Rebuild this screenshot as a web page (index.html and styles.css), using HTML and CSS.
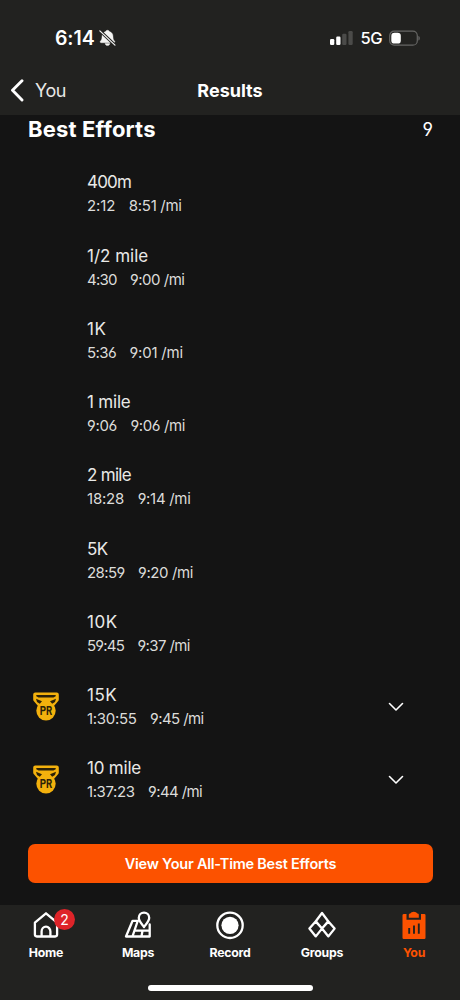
FILE: index.html
```html
<!DOCTYPE html>
<html lang="en">
<head>
<meta charset="utf-8">
<title>Results</title>
<link rel="stylesheet" href="styles.css">
</head>
<body>
<div class="screen">
  <header class="top">
    <div class="status">
      <div class="clock"><span class="time">6:14</span>
        <svg class="bell" width="17" height="18" viewBox="0 0 18 18"><path d="M9 .8c-1 0-1.700.6-2 1.400C4.300 3 3.200 5 3.200 7.300c0 3-.7 3.900-1.700 5-.6.8-.3 1.700.7 1.700h13.600c1 0 1.300-.9.7-1.700-1-1.100-1.700-2-1.700-5 0-2.300-1.100-4.300-3.800-5.100C10.700 1.400 10 .8 9 .8zM6.500 14.800h5c-.2 1.400-1.200 2.200-2.500 2.200s-2.300-.8-2.500-2.200z" fill="#f4f4f2" stroke="#f4f4f2" stroke-width=".4"/><path d="M1 1.500l16 15.200" stroke="#222220" stroke-width="3.200"/><path d="M.9 1.500l16 15" stroke="#f4f4f2" stroke-width="1.300" stroke-linecap="round"/></svg>
      </div>
      <div class="signals">
        <svg width="24" height="16" viewBox="0 0 24 16"><rect x="0" y="9" width="4.300" height="6" rx="1.200" fill="#fff"/><rect x="6.200" y="6.500" width="4.300" height="8.500" rx="1.200" fill="#fff"/><rect x="12.200" y="3.800" width="4.300" height="11.200" rx="1.200" fill="#4b4b49"/><rect x="18.400" y="1" width="4.300" height="14" rx="1.200" fill="#4b4b49"/></svg>
        <span class="net">5G</span>
        <svg width="32" height="17" viewBox="0 0 32 17"><rect x=".7" y="1.200" width="27.600" height="14" rx="4.500" fill="none" stroke="#666664" stroke-width="1.200"/><rect x="2.300" y="2.800" width="9.500" height="10.800" rx="3.200" fill="#fff"/><path d="M29.500 6c1.500.5 1.500 4 0 4.500z" fill="#777"/></svg>
      </div>
    </div>
    <nav class="navbar">
      <a class="back"><svg width="14" height="23" viewBox="0 0 14 23"><path d="M12 1.700L2.500 11.300l9.500 9.600" fill="none" stroke="#fff" stroke-width="2.900" stroke-linecap="round" stroke-linejoin="round"/></svg><span>You</span></a>
      <h1>Results</h1>
    </nav>
  </header>

  <main class="content">
    <div class="heading"><h2>Best Efforts</h2><span class="count">9</span></div>
    <ul class="efforts">
      <li class="effort"><div class="medal"></div><div class="info"><div class="name k8">400m</div><div class="stats"><span class="k1">2:12</span><span class="k3">8:51 /mi</span></div></div></li>
      <li class="effort"><div class="medal"></div><div class="info"><div class="name">1/2 mile</div><div class="stats"><span class="k8">4:30</span><span class="k5">9:00 /mi</span></div></div></li>
      <li class="effort"><div class="medal"></div><div class="info"><div class="name wide">1K</div><div class="stats"><span class="k6">5:36</span><span class="k2">9:01 /mi</span></div></div></li>
      <li class="effort"><div class="medal"></div><div class="info"><div class="name k2">1 mile</div><div class="stats"><span class="k3">9:06</span><span class="k4">9:06 /mi</span></div></div></li>
      <li class="effort"><div class="medal"></div><div class="info"><div class="name k7">2 mile</div><div class="stats"><span class="k2">18:28</span><span class="k3">9:14 /mi</span></div></div></li>
      <li class="effort"><div class="medal"></div><div class="info"><div class="name k5">5K</div><div class="stats"><span class="k6">28:59</span><span class="k4">9:20 /mi</span></div></div></li>
      <li class="effort"><div class="medal"></div><div class="info"><div class="name wide">10K</div><div class="stats"><span class="k8">59:45</span><span class="k6">9:37 /mi</span></div></div></li>
      <li class="effort"><div class="medal"><svg width="26" height="29" viewBox="0 0 26 29"><use href="#medal"/><text x="13" y="23.300" class="pr" textLength="12.500" lengthAdjust="spacingAndGlyphs">PR</text></svg></div><div class="info"><div class="name wide">15K</div><div class="stats"><span class="k3">1:30:55</span><span class="k6">9:45 /mi</span></div></div><svg class="chev" width="16" height="10" viewBox="0 0 16 10"><path d="M1.500 1.500L8 8l6.500-6.500"/></svg></li>
      <li class="effort"><div class="medal"><svg width="26" height="29" viewBox="0 0 26 29"><use href="#medal"/><text x="13" y="23.300" class="pr" textLength="12.500" lengthAdjust="spacingAndGlyphs">PR</text></svg></div><div class="info"><div class="name k2">10 mile</div><div class="stats"><span class="k4">1:37:23</span><span class="k6">9:44 /mi</span></div></div><svg class="chev" width="16" height="10" viewBox="0 0 16 10"><path d="M1.500 1.500L8 8l6.500-6.500"/></svg></li>
    </ul>
    <button class="cta">View Your All-Time Best Efforts</button>
  </main>

  <footer class="bottom">
    <div class="tabs">
      <div class="tab"><div class="icon"><svg width="30" height="30" viewBox="0 0 30 30"><path d="M15 3.300L3.900 12.700V24.600Q3.900 26.500 5.800 26.500H24.200Q26.100 26.500 26.100 24.600V12.700Z M10.600 26.500V21.500a4.400 4.800 0 0 1 8.800 0V26.500" class="line"/></svg><span class="badge">2</span></div><span>Home</span></div>
      <div class="tab"><div class="icon"><svg width="30" height="30" viewBox="0 0 30 30"><path d="M15.300 10.800H9.600L3 26.500H26.700V14.500M14.700 11L9.500 26.300M11.600 20.700H26.500M19.500 20.700L18.500 26.300" class="line"/><path d="M21 17C18.600 13.800 15.800 11.300 15.800 7.800a5.200 5.200 0 0 1 10.400 0C26.200 11.300 23.400 13.800 21 17Z" class="line pin"/></svg></div><span>Maps</span></div>
      <div class="tab"><div class="icon"><svg width="30" height="30" viewBox="0 0 30 30"><circle cx="15" cy="15.300" r="12.700" class="line"/><circle cx="15" cy="15.300" r="8.600" fill="#fff"/></svg></div><span>Record</span></div>
      <div class="tab"><div class="icon"><svg width="30" height="30" viewBox="0 0 30 30"><path d="M15 3L21.200 11.200 15 18.500 8.800 11.200ZM8.600 11.400L15 18.600 8.800 26.400 2.400 18.600ZM21.400 11.400L27.600 18.600 21.400 26.400 15 18.600Z" class="line"/></svg></div><span>Groups</span></div>
      <div class="tab active"><div class="icon"><svg width="30" height="30" viewBox="0 0 30 30"><path d="M5 4H7.500V9.800H22V4H25.300Q26.500 4 26.500 5.200V27.800Q26.500 29 25.300 29H4.700Q3.500 29 3.500 27.800V5.200Q3.500 4 5 4Z" fill="#fc5200"/><path d="M9.800 7.700V4.500Q10 3.600 11.200 3.600Q12.200 1.700 14.800 1.700T18.400 3.600Q19.700 3.600 19.800 4.500V7.700Z" fill="#fc5200"/><path d="M10.200 18V23.800M15 15.500V23.800M19.800 13.500V23.800" stroke="#222220" stroke-width="1.900"/></svg></div><span>You</span></div>
    </div>
    <div class="home-bar"></div>
  </footer>
</div>
<svg class="defs" width="0" height="0"><defs><g id="medal"><path d="M2.300.5H23.700Q25.800.5 25.800 2.600V7.500Q25.800 9 24.600 9.800L21 14H5L1.400 9.800Q.2 9 .2 7.500V2.600Q.2.500 2.300.5Z" fill="#f3b10d"/><path d="M3.300 3H22.700V4.200L20.500 5.500H5.500L3.300 4.200Z" fill="#2b2108"/><circle cx="13" cy="18.800" r="9.700" fill="#f3b10d"/><path d="M3 6.800L9 9.300 6.800 11.700 4 10ZM23 6.800L17 9.300 19.200 11.700 22 10Z" fill="#2b2108"/></g></defs></svg>
</body>
</html>
```

FILE: styles.css
```css
* { box-sizing: border-box; }
body { margin: 0; background: #141414; color: #fff; font-family: Inter, "Liberation Sans", sans-serif; }
.screen { width: 460px; height: 1000px; display: flex; flex-direction: column; overflow: hidden; }
.defs { display: block; }
svg { flex: none; }

.top { height: 115px; background: #222220; flex: none; }
.status { height: 65px; padding: 11px 39px 0 55px; display: flex; justify-content: space-between; align-items: center; }
.clock { display: flex; align-items: center; gap: 4px; }
.time { font-size: 19.500px; font-weight: 600; line-height: 24px; letter-spacing: -0.1px; }
.bell { display: block; }
.signals { display: flex; align-items: center; }
.net { font-size: 16.500px; font-weight: 500; line-height: 24px; margin: 0 7px 0 6px; letter-spacing: -0.5px; }

.navbar { height: 50px; display: grid; grid-template-columns: 1fr auto 1fr; align-items: center; padding: 1px 10px 0; }
.back { display: flex; align-items: center; gap: 11px; font-size: 18px; line-height: 24px; color: #e8e8e6; letter-spacing: -0.4px; }
h1 { margin: 0; font-size: 18px; line-height: 24px; font-weight: 700; letter-spacing: 0; }

.content { flex: 1; padding: 0 27px 0 28px; display: flex; flex-direction: column; }
.heading { height: 45.700px; display: flex; justify-content: space-between; line-height: 28px; }
h2 { margin: 0; font-size: 22px; font-weight: 700; line-height: 28px; letter-spacing: 0.150px; }
.count { font-size: 18px; line-height: 30px; font-feature-settings: "cv04"; }

.efforts { list-style: none; margin: 0; padding: 0; }
.effort { height: 73.250px; padding-right: 29px; display: flex; align-items: center; }
.medal { width: 59px; padding-left: 5px; height: 36px; flex: none; }
.medal svg { display: block; }
.pr { font: 700 13.500px Roboto, sans-serif; fill: #2b2108; text-anchor: middle; }
.info { flex: 1; padding-bottom: 6px; font-feature-settings: "cv03", "cv04"; }
.name { font-size: 17px; line-height: 24px; color: #e9e9e7; }
.stats { display: flex; gap: 13.500px; font-size: 15px; line-height: 24px; color: #dcdcda; }
.chev { margin-bottom: 6px; }
.chev path { fill: none; stroke: #fff; stroke-width: 1.600; stroke-linecap: round; stroke-linejoin: round; }

/* Tracking steps, in tenths of a pixel */
.k1 { letter-spacing: -0.1px; }
.k2 { letter-spacing: -0.2px; }
.k3 { letter-spacing: -0.3px; }
.k4 { letter-spacing: -0.4px; }
.k5 { letter-spacing: -0.5px; }
.k6 { letter-spacing: -0.6px; }
.k7 { letter-spacing: -0.7px; }
.k8 { letter-spacing: -0.8px; }
.wide { letter-spacing: 0.5px; }

.cta { height: 39px; margin-top: 24px; border: 0; border-radius: 7px; background: #fc5200; color: #fff; font: 600 14.500px Inter, sans-serif; letter-spacing: -0.230px; }

.bottom { height: 95px; flex: none; background: #222220; display: flex; flex-direction: column; align-items: center; }
.tabs { width: 100%; display: grid; grid-template-columns: repeat(5, 92px); padding-top: 5px; height: 80px; }
.tab { display: flex; flex-direction: column; align-items: center; font-size: 12.300px; font-weight: 700; line-height: 18px; gap: 4px; letter-spacing: -0.25px; }
.tab svg { display: block; }
.icon { position: relative; }
.line { fill: none; stroke: #fff; stroke-width: 2.300; stroke-linejoin: round; stroke-linecap: round; }
.pin { fill: #222220; }
.badge { position: absolute; left: 23px; top: -1px; width: 21px; height: 21px; border-radius: 50%; background: #de2429; font-size: 14px; font-weight: 400; line-height: 21px; text-align: center; letter-spacing: 0; }
.active { color: #fc5200; }
.home-bar { width: 165px; height: 6px; border-radius: 3px; background: #fff; flex: none; }
```
